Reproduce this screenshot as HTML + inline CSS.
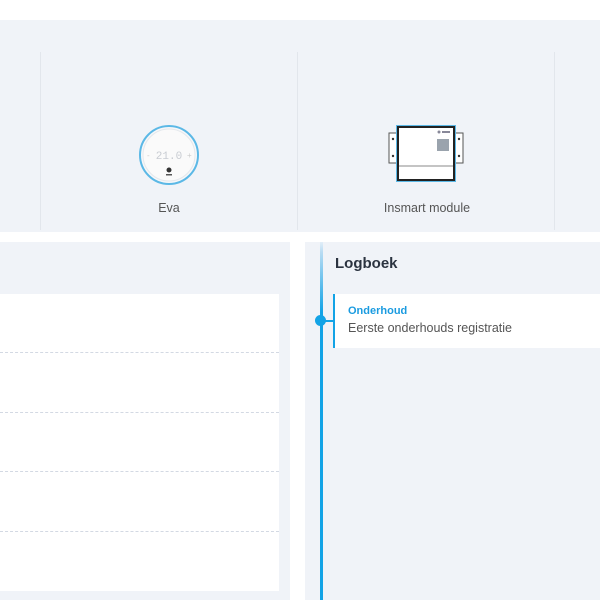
<!DOCTYPE html><html><head><style>
*{margin:0;padding:0;box-sizing:border-box}
body{width:600px;height:600px;background:#fff;font-family:"Liberation Sans",sans-serif;position:relative;overflow:hidden}
.a{position:absolute}
.g{background:#f0f3f8}
.div{width:1px;background:#e2e6ec;top:52px;height:178px}
.dash{left:0;width:279px;border-top:1px dashed #d3d9e3}
</style></head><body>
<div class="a g" style="left:0;top:20px;width:600px;height:212px"></div>
<div class="a div" style="left:40px"></div>
<div class="a div" style="left:297px"></div>
<div class="a div" style="left:554px"></div>
<svg class="a" style="left:138px;top:124px" width="62" height="62" viewBox="0 0 62 62">
<circle cx="31" cy="31" r="29" fill="#f6f7f9" stroke="#5bb8e6" stroke-width="2"/>
<circle cx="31" cy="31" r="26" fill="#fafafa" stroke="#e4e8ec"/>
<text x="31" y="35" text-anchor="middle" font-size="11" fill="#c8ccd2" font-family="Liberation Mono">21.0</text>
<text x="9" y="34" font-size="8" fill="#ccc">-</text><text x="49" y="34" font-size="8" fill="#ccc">+</text>
<circle cx="31" cy="46" r="2.5" fill="#333"/><rect x="28" y="50" width="6" height="1.5" fill="#555"/>
</svg>
<div class="a" style="left:0;top:201px;width:338px;text-align:center;font-size:12.5px;color:#555">Eva</div>
<svg class="a" style="left:388px;top:123px" width="76" height="62" viewBox="0 0 76 62">
<rect x="1" y="10" width="8" height="30" fill="#fff" stroke="#555"/><rect x="67" y="10" width="8" height="30" fill="#fff" stroke="#555"/>
<circle cx="5" cy="16" r="1.2" fill="#333"/><circle cx="5" cy="33" r="1.2" fill="#333"/><circle cx="71" cy="16" r="1.2" fill="#333"/><circle cx="71" cy="33" r="1.2" fill="#333"/>
<rect x="8" y="2" width="60" height="57" fill="#5bb8e6"/>
<rect x="10" y="4" width="56" height="53" fill="#fff" stroke="#222" stroke-width="2"/>
<line x1="11" y1="43" x2="65" y2="43" stroke="#888"/>
<rect x="49" y="16" width="12" height="12" fill="#9aa3ad"/>
<circle cx="51" cy="9" r="1.5" fill="#889"/><rect x="54" y="8" width="8" height="2" fill="#889"/>
</svg>
<div class="a" style="left:340px;top:201px;width:174px;text-align:center;font-size:12.5px;color:#555">Insmart module</div>
<div class="a g" style="left:0;top:242px;width:290px;height:358px"></div>
<div class="a" style="left:0;top:294px;width:279px;height:297px;background:#fff"></div>
<div class="a dash" style="top:352px"></div>
<div class="a dash" style="top:412px"></div>
<div class="a dash" style="top:471px"></div>
<div class="a dash" style="top:531px"></div>
<div class="a g" style="left:305px;top:242px;width:295px;height:358px"></div>
<div class="a" style="left:320px;top:242px;width:3px;height:358px;background:linear-gradient(#e2eef8,#b9dcf3 10px,#12a3e6 70px)"></div>
<div class="a" style="left:315px;top:315px;width:11px;height:11px;border-radius:50%;background:#12a3e6"></div>
<div class="a" style="left:323px;top:320px;width:11px;height:2px;background:#12a3e6"></div>
<div class="a" style="left:335px;top:255px;font-size:15px;font-weight:bold;color:#2b3340">Logboek</div>
<div class="a" style="left:333px;top:294px;width:267px;height:54px;background:#fff;border-left:2px solid #12a3e6"></div>
<div class="a" style="left:348px;top:305px;font-size:11px;font-weight:bold;color:#1a9be0">Onderhoud</div>
<div class="a" style="left:348px;top:321px;font-size:12.5px;color:#555">Eerste onderhouds registratie</div>
</body></html>
